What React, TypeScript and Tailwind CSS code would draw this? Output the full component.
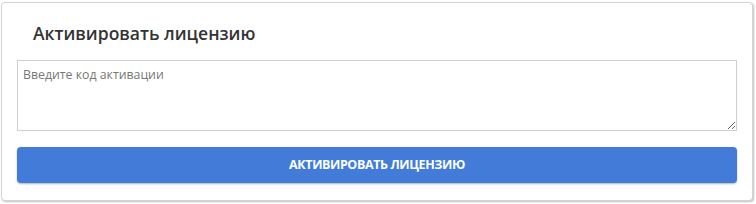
import React, { useState } from 'react';

export default function App() {
  const [code, setCode] = useState('');

  return (
    <div className="w-[756px] h-[204px] bg-white pt-[2px] pl-[1px]" style={{ fontFamily: '"Open Sans", "Noto Sans", sans-serif' }}>
      <div className="w-[752px] h-[199px] rounded-[4px] border border-[#d4d4d4] bg-white shadow-[1px_1px_2px_rgba(0,0,0,0.25)] px-[15px] pt-[17px]">
        <h2 className="pl-[16px] text-[17.5px] leading-[26px] font-semibold text-[#333333] mb-[14px]">
          Активировать лицензию
        </h2>
        <textarea
          value={code}
          onChange={e => setCode(e.target.value)}
          placeholder="Введите код активации"
          className="block w-[720px] h-[71px] border border-[#cfcfcf] px-[5px] pt-[5px] pb-[4px] text-[12.3px] leading-[18px] text-[#333] placeholder:text-[#777] outline-none"
        />
        <button className="mt-[16px] w-[720px] h-[36px] rounded-[4px] bg-[#427cd8] text-white text-[12.5px] font-bold uppercase tracking-[-0.4px] shadow-[0_1px_2px_rgba(0,0,0,0.3)]">
          Активировать лицензию
        </button>
      </div>
    </div>
  );
}
